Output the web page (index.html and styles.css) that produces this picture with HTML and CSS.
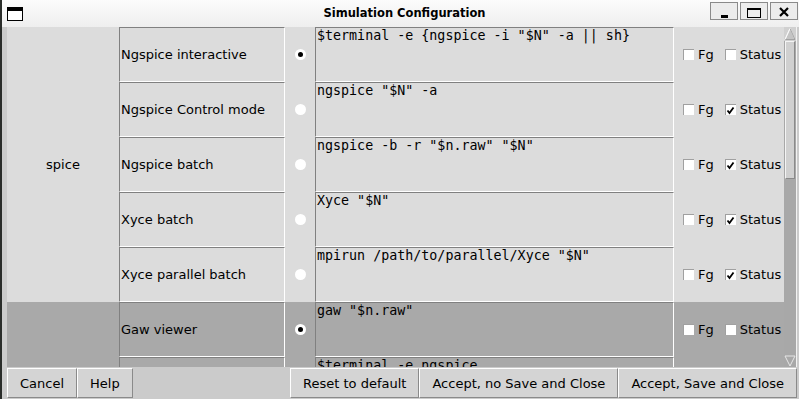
FILE: index.html
```html
<!DOCTYPE html>
<html>
<head>
<meta charset="utf-8">
<title>Simulation Configuration</title>
<link rel="stylesheet" href="styles.css">
</head>
<body>
<div class="screen">
  <div class="desk"></div>
  <div class="win">
    <div class="titlebar">
      <div class="ticon">
        <svg width="16" height="14" viewBox="0 0 16 14"><rect x="0.5" y="0.5" width="15" height="13" fill="#fff" stroke="#000"/><rect x="0" y="0" width="16" height="4" fill="#000"/></svg>
      </div>
      <div class="title">Simulation Configuration</div>
      <div class="tbtns">
        <div class="tbtn"><svg width="26" height="16" viewBox="0 0 26 16"><rect x="10" y="12" width="7" height="3" fill="#000"/></svg></div>
        <div class="tbtn"><svg width="26" height="16" viewBox="0 0 26 16"><rect x="6.5" y="5.5" width="13" height="9" fill="none" stroke="#000"/><rect x="6" y="5" width="14" height="2" fill="#000"/></svg></div>
        <div class="tbtn"><svg width="26" height="16" viewBox="0 0 26 16"><path d="M9 5 L17 13 M17 5 L9 13" stroke="#000" stroke-width="2.2" fill="none"/></svg></div>
      </div>
    </div>
    <div class="wbody">
      <div class="content">
        <div class="table">
          <div class="grp g1">spice</div>

          <div class="name">Ngspice interactive</div>
          <div class="rad"><span class="rb on"></span></div>
          <div class="cmd">$terminal -e {ngspice -i "$N" -a || sh}</div>
          <div class="chk"><span class="cb"></span><span class="lbl-fg">Fg</span><span class="cb"></span><span>Status</span></div>

          <div class="name">Ngspice Control mode</div>
          <div class="rad"><span class="rb"></span></div>
          <div class="cmd">ngspice "$N" -a</div>
          <div class="chk"><span class="cb"></span><span class="lbl-fg">Fg</span><span class="cb on"><svg width="9" height="9" viewBox="0 0 9 9"><path d="M1.5 4.5 L3.5 7 L7.5 1.5" stroke="#000" stroke-width="1.8" fill="none"/></svg></span><span>Status</span></div>

          <div class="name">Ngspice batch</div>
          <div class="rad"><span class="rb"></span></div>
          <div class="cmd">ngspice -b -r "$n.raw" "$N"</div>
          <div class="chk"><span class="cb"></span><span class="lbl-fg">Fg</span><span class="cb on"><svg width="9" height="9" viewBox="0 0 9 9"><path d="M1.5 4.5 L3.5 7 L7.5 1.5" stroke="#000" stroke-width="1.8" fill="none"/></svg></span><span>Status</span></div>

          <div class="name">Xyce batch</div>
          <div class="rad"><span class="rb"></span></div>
          <div class="cmd">Xyce "$N"</div>
          <div class="chk"><span class="cb"></span><span class="lbl-fg">Fg</span><span class="cb on"><svg width="9" height="9" viewBox="0 0 9 9"><path d="M1.5 4.5 L3.5 7 L7.5 1.5" stroke="#000" stroke-width="1.8" fill="none"/></svg></span><span>Status</span></div>

          <div class="name">Xyce parallel batch</div>
          <div class="rad"><span class="rb"></span></div>
          <div class="cmd">mpirun /path/to/parallel/Xyce "$N"</div>
          <div class="chk"><span class="cb"></span><span class="lbl-fg">Fg</span><span class="cb on"><svg width="9" height="9" viewBox="0 0 9 9"><path d="M1.5 4.5 L3.5 7 L7.5 1.5" stroke="#000" stroke-width="1.8" fill="none"/></svg></span><span>Status</span></div>

          <div class="grp g2 dk"></div>

          <div class="name dk">Gaw viewer</div>
          <div class="rad dk"><span class="rb on"></span></div>
          <div class="cmd dk">gaw "$n.raw"</div>
          <div class="chk dk"><span class="cb"></span><span class="lbl-fg">Fg</span><span class="cb"></span><span>Status</span></div>

          <div class="name dk"></div>
          <div class="rad dk"></div>
          <div class="cmd dk">$terminal -e ngspice</div>
          <div class="chk dk"></div>
        </div>
        <div class="sb">
          <div class="sb-up"><svg width="12" height="14" viewBox="0 0 12 14"><polygon points="6,1.5 11,12.5 1,12.5" fill="#c4c4c4" stroke="#f6f6f6"/><path d="M6 1.5 L11 12.5 L1 12.5" fill="none" stroke="#8e8e8e" stroke-width="0.8"/><path d="M1 12.5 L6 1.5" stroke="#fafafa" fill="none"/></svg></div>
          <div class="thumb"></div>
          <div class="track"></div>
          <div class="sb-dn"><svg width="12" height="12" viewBox="0 0 12 12"><polygon points="1,1 11,1 6,11" fill="#a8a8a8" stroke="#e6e6e6"/></svg></div>
        </div>
        <div class="wedge"></div>
      </div>
      <div class="bar">
        <div class="btn">Cancel</div>
        <div class="btn">Help</div>
        <div class="spacer"></div>
        <div class="btn">Reset to default</div>
        <div class="btn">Accept, no Save and Close</div>
        <div class="btn">Accept, Save and Close</div>
      </div>
    </div>
  </div>
</div>
</body>
</html>
```
FILE: styles.css
```css
* { box-sizing: border-box; margin: 0; padding: 0; }
html, body { width: 799px; height: 399px; overflow: hidden; background: #2c2c2c; }
body { font-family: "DejaVu Sans", sans-serif; font-size: 13px; color: #000; }

.screen { display: flex; width: 799px; height: 399px; }
.desk { width: 2px; background: #2a2d2a; }
.win { width: 797px; display: flex; flex-direction: column; }

.titlebar {
  height: 27px;
  display: grid;
  grid-template-columns: 1fr auto 1fr;
  align-items: start;
  background: linear-gradient(#fcfcfc, #eeeeee);
  padding: 0 1px 0 5px;
}
.ticon { padding-top: 7px; display: flex; }
.ticon svg { display: block; }
.title { font-weight: bold; font-size: 11.5px; line-height: 14px; padding-top: 6px; padding-left: 4px; }
.tbtns { display: flex; justify-content: flex-end; gap: 2px; padding-top: 2px; }
.tbtn { width: 28px; height: 18px; border: 1px solid #8a8a8a; background: #ececec; display: flex; }
.tbtn svg { display: block; }

.wbody { flex: 1; display: flex; flex-direction: column; padding-left: 5px; background: #cbcbcb; }
.content { display: flex; height: 340px; }

.table {
  width: 777px;
  height: 340px;
  display: grid;
  grid-template-columns: 112px 166px 30px 359px 110px;
  grid-auto-rows: 55px;
  overflow: hidden;
  background: #dcdcdc;
}
.dk { background: #a9a9a9; }
.grp { grid-column: 1; display: flex; align-items: center; justify-content: center; }
.g1 { grid-row: span 5; }
.g2 { grid-row: span 3; }

.name, .cmd {
  border: 1px solid;
  border-color: #808080 #ffffff #ffffff #808080;
}
.name { display: flex; align-items: center; padding-left: 1px; white-space: nowrap; }
.rad { display: flex; align-items: center; padding-left: 10px; }
.rb {
  width: 11px; height: 11px; border-radius: 50%;
  background: #fff;
  display: flex; align-items: center; justify-content: center;
}
.rb.on::after { content: ""; width: 5px; height: 5px; border-radius: 50%; background: #000; }
.cmd {
  font-family: "DejaVu Sans Mono", monospace;
  font-size: 13.33px;
  line-height: 16px;
  padding-left: 1px;
  white-space: pre;
  overflow: hidden;
}
.chk { display: flex; align-items: center; padding-left: 9px; white-space: nowrap; }
.cb {
  width: 11px; height: 11px;
  background: #fff;
  border-top: 1px solid #a0a0a0;
  border-left: 1px solid #a0a0a0;
  margin-right: 4px;
  display: flex; align-items: center; justify-content: center;
}
.cb svg { display: block; }
.lbl-fg { margin-right: 11px; }

.sb { width: 13px; display: flex; flex-direction: column; background: #a8a8a8; border-right: 1px solid #f2f2f2; }
.sb-up { height: 14px; display: flex; background: #d0d0d0; }
.sb-up svg, .sb-dn svg { display: block; }
.thumb { height: 138px; margin: 0 1px; background: #d0d0d0; border: 1px solid; border-color: #f4f4f4 #8a8a8a #8a8a8a #f4f4f4; }
.track { flex: 1; }
.sb-dn { height: 12px; display: flex; }
.wedge { width: 2px; background: #cbcbcb; }

.bar { height: 32px; display: flex; align-items: flex-start; padding: 1px 2px 0 0; }
.spacer { flex: 1; }
.btn {
  height: 30px;
  padding: 0 12px;
  display: flex; align-items: center; justify-content: center;
  background: #d4d4d4;
  border: 1px solid;
  border-color: #ffffff #8a8a8a #8a8a8a #ffffff;
  white-space: nowrap;
}
```
